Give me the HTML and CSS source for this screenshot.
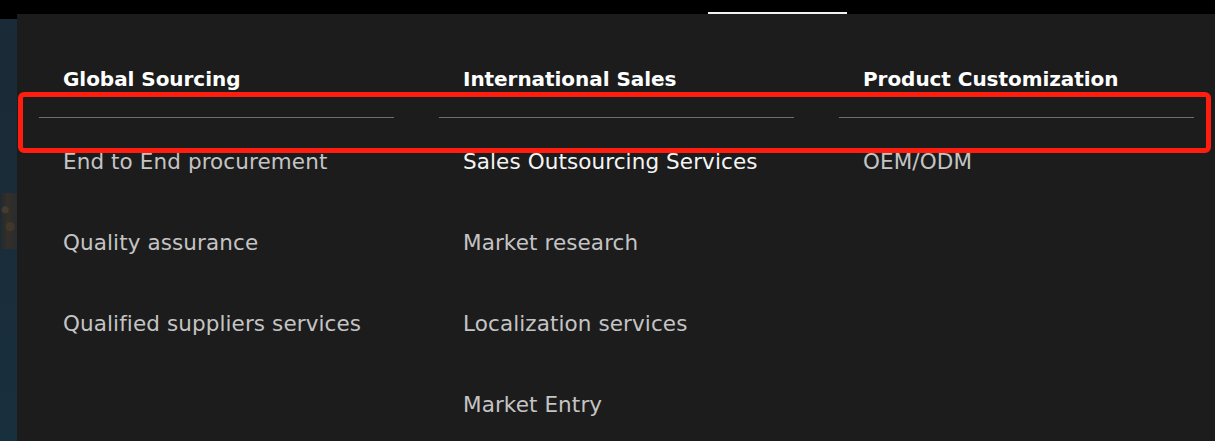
FILE: index.html
```html
<!DOCTYPE html>
<html lang="en">
<head>
<meta charset="utf-8">
<title>Services menu</title>
<link rel="stylesheet" href="styles.css">
</head>
<body>
<div class="topbar">
  <span class="tab-indicator"></span>
</div>
<div class="stage">
  <div class="side"><div class="side-photo"></div></div>
  <nav class="panel">
    <div class="col">
      <h3 class="col-title">Global Sourcing</h3>
      <div class="rule"></div>
      <ul class="links">
        <li>End to End procurement</li>
        <li>Quality assurance</li>
        <li>Qualified suppliers services</li>
      </ul>
    </div>
    <div class="col">
      <h3 class="col-title">International Sales</h3>
      <div class="rule"></div>
      <ul class="links">
        <li class="active">Sales Outsourcing Services</li>
        <li>Market research</li>
        <li>Localization services</li>
        <li>Market Entry</li>
      </ul>
    </div>
    <div class="col">
      <h3 class="col-title">Product Customization</h3>
      <div class="rule"></div>
      <ul class="links">
        <li>OEM/ODM</li>
      </ul>
    </div>
  </nav>
  <div class="highlight"></div>
</div>
</body>
</html>
```

FILE: styles.css
```css
* { box-sizing: border-box; }
html, body { margin: 0; padding: 0; }
body {
  background: #000;
  font-family: "DejaVu Sans", "Noto Sans", sans-serif;
  width: 1215px;
  height: 441px;
  overflow: hidden;
}
.topbar {
  height: 14px;
  background: #000;
  display: flex;
  align-items: flex-end;
  padding-left: 708px;
}
.tab-indicator {
  display: block;
  width: 139px;
  height: 2px;
  background: #f2f2f2;
}
.stage {
  position: relative;
  display: flex;
  height: 427px;
}
.side {
  flex: 0 0 17px;
  width: 17px;
  margin-top: 5px;
  background: linear-gradient(180deg, #1a2a36 0%, #1b2c39 40%, #182f3e 100%);
  display: flex;
  flex-direction: column;
  padding-top: 174px;
}
.side-photo {
  height: 56px;
  background:
    radial-gradient(circle at 30% 30%, rgba(90, 70, 45, 0.7) 0 3px, transparent 4px),
    radial-gradient(circle at 60% 60%, rgba(80, 62, 40, 0.7) 0 4px, transparent 5px),
    linear-gradient(90deg, #1f2a30 0%, #3a3026 45%, #2a2c2c 100%);
  opacity: 0.85;
}
.panel {
  flex: 1 1 auto;
  min-width: 0;
  overflow: hidden;
  background: #1c1c1c;
  display: grid;
  grid-template-columns: 400px 400px 400px;
  padding-left: 22px;
  padding-top: 51px;
}
.col { display: flex; flex-direction: column; }
.col-title {
  margin: 0;
  padding-left: 24px;
  font-size: 20px;
  font-weight: 700;
  line-height: 28px;
  color: #ffffff;
  letter-spacing: -0.05px;
  white-space: nowrap;
}
.rule {
  width: 355px;
  height: 1px;
  background: #6e6e6e;
  margin-top: 24px;
}
.links {
  list-style: none;
  margin: 0;
  padding: 0 0 0 24px;
  display: flex;
  flex-direction: column;
  gap: 53px;
  padding-top: 30px;
}
.links li {
  font-size: 21.5px;
  line-height: 28px;
  color: #c4c4c4;
  letter-spacing: 0.1px;
  white-space: nowrap;
}
.links li.active { color: #f4f4f4; }
.highlight {
  position: absolute;
  left: 18px;
  top: 78px;
  width: 1193px;
  height: 61px;
  border: 5px solid #ff1d10;
  border-radius: 6px;
  pointer-events: none;
}
```
